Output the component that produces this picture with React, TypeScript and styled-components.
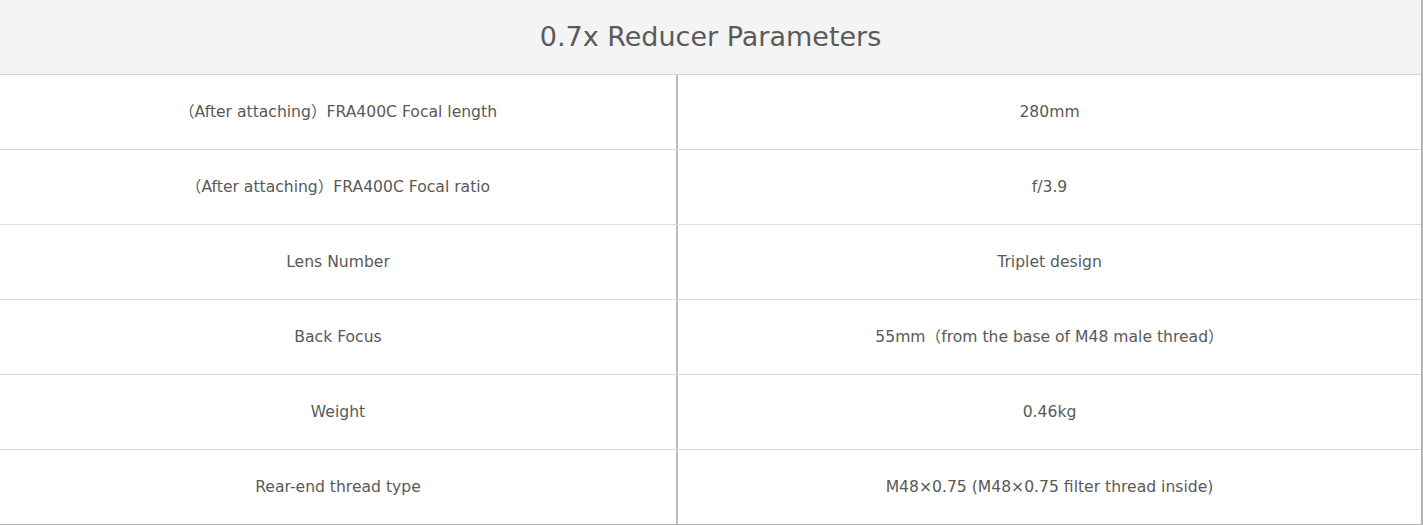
import React from "react";
import styled, { createGlobalStyle } from "styled-components";

const Global = createGlobalStyle`
  html, body { margin: 0; padding: 0; background: #ffffff; }
  body { font-family: "DejaVu Sans", "Noto Sans CJK SC", sans-serif; }
`;

const Table = styled.div`
  width: 1421px;
  border-right: 2px solid #b3b3b3;
  border-bottom: 2px solid #b3b3b3;
  box-sizing: content-box;
`;

const Header = styled.div`
  height: 74px;
  background: #f4f4f4;
  border-bottom: 1px solid #d8d8d8;
  display: flex;
  align-items: center;
  justify-content: center;
  font-size: 27px;
  line-height: 32px;
  color: #5a5a5a;
`;

const Row = styled.div<{ $last?: boolean }>`
  display: grid;
  grid-template-columns: 676px 2px 1fr;
  height: 74px;
  border-bottom: ${(p) => (p.$last ? "none" : "1px solid #dcdcdc")};
`;

const Divider = styled.div`
  background: #bcbcbc;
`;

const Cell = styled.div`
  display: flex;
  align-items: center;
  justify-content: center;
  font-size: 15.6px;
  line-height: 20px;
  height: 74px;
  color: #595959;
  & > span { display: block; height: 20px; line-height: 20px; overflow: visible; }
`;

const rows: [string, string][] = [
  ["（After attaching）FRA400C Focal length", "280mm"],
  ["（After attaching）FRA400C Focal ratio", "f/3.9"],
  ["Lens Number", "Triplet design"],
  ["Back Focus", "55mm（from the base of M48 male thread）"],
  ["Weight", "0.46kg"],
  ["Rear-end thread type", "M48×0.75 (M48×0.75 filter thread inside)"],
];

export default function App() {
  return (
    <>
      <Global />
      <Table>
        <Header>0.7x Reducer Parameters</Header>
        {rows.map(([k, v], i) => (
          <Row key={k} $last={i === rows.length - 1}>
            <Cell><span>{k}</span></Cell>
            <Divider />
            <Cell><span>{v}</span></Cell>
          </Row>
        ))}
      </Table>
    </>
  );
}
